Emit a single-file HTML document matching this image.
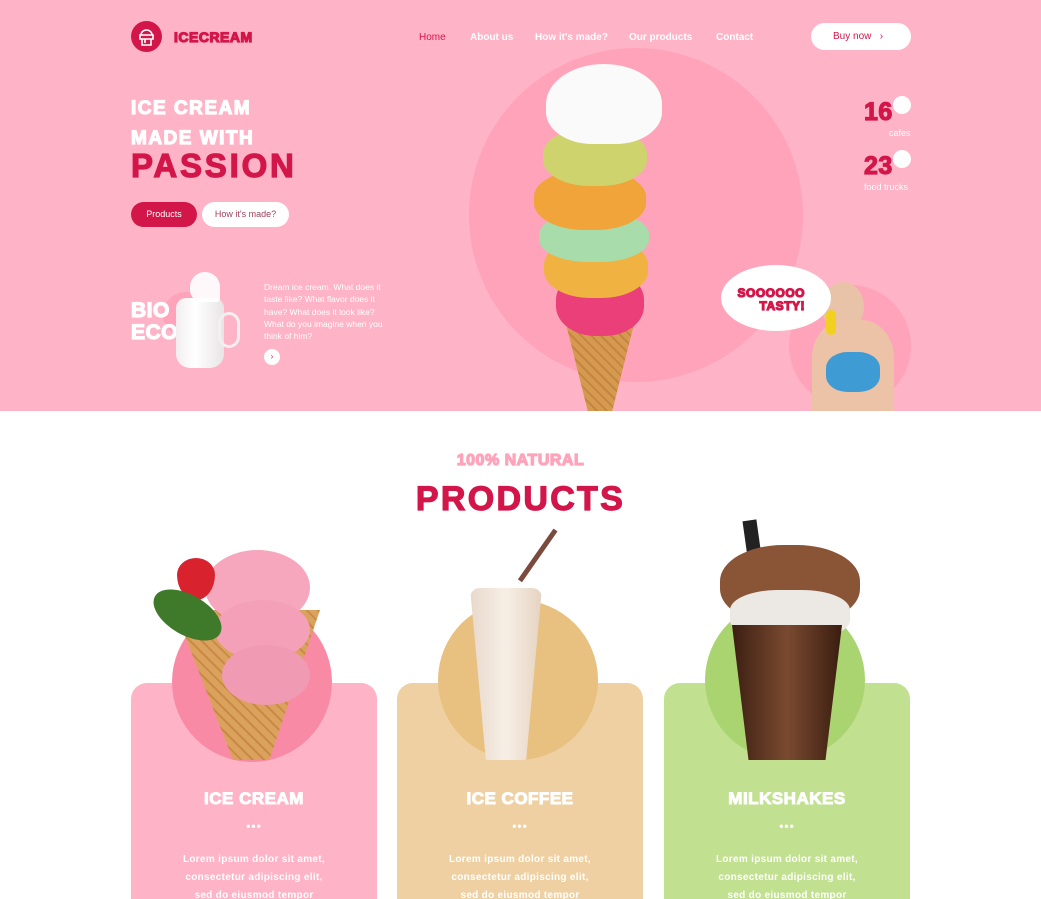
<!DOCTYPE html>
<html style="width:1041px;height:899px;overflow:hidden"><head><meta charset="utf-8"><style>
*{margin:0;padding:0;box-sizing:border-box}
body{width:1041px;height:899px;overflow:hidden;background:#fff;font-family:"Liberation Sans",sans-serif;position:relative}
.abs{position:absolute}
.hero{position:absolute;left:0;top:0;width:1041px;height:411px;background:#ffb3c6;overflow:hidden}
.heavy{font-weight:900;-webkit-text-stroke:1.2px currentColor;letter-spacing:0.5px}
.nav a{position:absolute;top:32px;font-size:10px;font-weight:bold;color:#fff;text-decoration:none}
.card{position:absolute;top:683px;width:246px;height:240px;border-radius:16px;text-align:center;color:#fff}
.card h3{position:absolute;top:106px;width:100%;font-size:17px;font-weight:900;-webkit-text-stroke:1px #fff;letter-spacing:0.5px}
.card .dots{position:absolute;top:136px;width:100%;font-size:12px;font-weight:bold;letter-spacing:1px}
.card p{position:absolute;top:168px;width:100%;font-size:10px;font-weight:bold;line-height:18px;letter-spacing:0.3px}
</style></head><body>
<div class="hero">
  <div class="abs" style="left:469px;top:48px;width:334px;height:334px;border-radius:50%;background:#ffa3ba"></div>
  <div class="abs" style="left:789px;top:285px;width:122px;height:122px;border-radius:50%;background:#ffa3ba"></div>
  <div class="abs" style="left:131px;top:21px;width:31px;height:31px;border-radius:50%;background:#d3164a"></div>
  <svg class="abs" style="left:131px;top:21px" width="31" height="31" viewBox="0 0 31 31"><path d="M10 14a5.5 5 0 0 1 11 0M9 14h13v4H9zM11 18v6h9v-6M14 18v4" fill="none" stroke="#fff" stroke-width="1.6"/></svg>
  <div class="abs heavy" style="left:174px;top:29px;font-size:14px;color:#d3164a">ICECREAM</div>
  <div class="nav">
    <a style="left:419px;color:#d3164a;font-weight:normal">Home</a>
    <a style="left:470px">About us</a>
    <a style="left:535px">How it's made?</a>
    <a style="left:629px">Our products</a>
    <a style="left:716px">Contact</a>
  </div>
  <div class="abs" style="left:811px;top:23px;width:100px;height:27px;border-radius:14px;background:#fff;color:#d3164a;font-size:10px;line-height:27px;padding-left:22px">Buy now &nbsp;&nbsp;›</div>
  <div class="abs heavy" style="left:131px;top:94px;font-size:19px;color:#fff;line-height:30px;letter-spacing:1.5px">ICE CREAM<br>MADE WITH</div>
  <div class="abs heavy" style="left:131px;top:147px;font-size:33px;color:#d3164a;letter-spacing:2.8px">PASSION</div>
  <div class="abs" style="left:131px;top:202px;width:66px;height:25px;border-radius:13px;background:#d3164a;color:#fff;font-size:9px;line-height:25px;text-align:center">Products</div>
  <div class="abs" style="left:202px;top:202px;width:87px;height:25px;border-radius:13px;background:#fff;color:#a0405a;font-size:9px;line-height:25px;text-align:center">How it's made?</div>
  <div class="abs" style="left:163px;top:292px;width:45px;height:45px;border-radius:50%;background:#ffa3ba"></div>
  <div class="abs heavy" style="left:131px;top:300px;font-size:21px;color:#fff;line-height:22px">BIO<br>ECO</div>
  <div class="abs" style="left:176px;top:298px;width:48px;height:70px;border-radius:10px 10px 14px 14px;background:linear-gradient(90deg,#f2eef0,#fff 40%,#e8e4e6)"></div>
  <div class="abs" style="left:218px;top:312px;width:22px;height:36px;border:3px solid #f3eef0;border-radius:12px"></div>
  <div class="abs" style="left:190px;top:272px;width:30px;height:30px;border-radius:50% 50% 10% 40%;background:#fff;opacity:.9"></div>
  <div class="abs" style="left:264px;top:281px;width:130px;font-size:8.5px;line-height:12.3px;color:#fff">Dream ice cream. What does it taste like? What flavor does it have? What does it look like? What do you imagine when you think of him?</div>
  <div class="abs" style="left:264px;top:349px;width:16px;height:16px;border-radius:50%;background:#fff;color:#d3164a;font-size:8px;text-align:center;line-height:16px">›</div>
  <div class="abs" style="left:560px;top:300px;width:80px;height:112px;background:repeating-linear-gradient(45deg,#d59a50 0 5px,#c58440 5px 7px);clip-path:polygon(0 0,100% 0,65% 100%,35% 100%)"></div>
  <div class="abs" style="left:556px;top:270px;width:88px;height:66px;border-radius:45%;background:#ea3f78"></div>
  <div class="abs" style="left:544px;top:238px;width:104px;height:60px;border-radius:45%;background:#f0b240"></div>
  <div class="abs" style="left:539px;top:212px;width:110px;height:50px;border-radius:45%;background:#a8dcaa"></div>
  <div class="abs" style="left:534px;top:170px;width:112px;height:60px;border-radius:45%;background:#f0a43a"></div>
  <div class="abs" style="left:543px;top:128px;width:104px;height:58px;border-radius:45%;background:#cfd36e"></div>
  <div class="abs" style="left:546px;top:64px;width:116px;height:80px;border-radius:50% 50% 40% 40%;background:#fafafa"></div>
  <div class="abs" style="left:893px;top:96px;width:18px;height:18px;border-radius:50%;background:#fff"></div>
  <div class="abs heavy" style="left:864px;top:98px;font-size:25px;color:#d3164a">16</div>
  <div class="abs" style="left:889px;top:128px;font-size:9px;color:#fff">cafes</div>
  <div class="abs" style="left:893px;top:150px;width:18px;height:18px;border-radius:50%;background:#fff"></div>
  <div class="abs heavy" style="left:864px;top:152px;font-size:25px;color:#d3164a">23</div>
  <div class="abs" style="left:864px;top:182px;font-size:9px;color:#fff">food trucks</div>
  <div class="abs" style="left:822px;top:282px;width:42px;height:50px;border-radius:50%;background:#e9c3a8"></div>
  <div class="abs" style="left:812px;top:320px;width:82px;height:95px;border-radius:40% 40% 0 0;background:#ecc3a6"></div>
  <div class="abs" style="left:826px;top:352px;width:54px;height:40px;border-radius:40%;background:#3e9bd4"></div>
  <div class="abs" style="left:826px;top:310px;width:10px;height:25px;background:#f2d020;border-radius:5px"></div>
  <div class="abs" style="left:721px;top:265px;width:110px;height:66px;border-radius:50%;background:#fff"></div>
  <div class="abs heavy" style="left:735px;top:287px;font-size:12px;color:#d3164a;line-height:13px;text-align:right;width:70px">SOOOOOO<br>TASTY!</div>
</div>
<div class="abs heavy" style="left:0;top:452px;width:1041px;text-align:center;font-size:16px;color:#ffa3ba">100% NATURAL</div>
<div class="abs heavy" style="left:0;top:480px;width:1041px;text-align:center;font-size:34px;color:#d3164a;letter-spacing:2.3px">PRODUCTS</div>

<div class="card" style="left:131px;background:#ffb3c6"><h3>ICE CREAM</h3><div class="dots">•••</div><p>Lorem ipsum dolor sit amet,<br>consectetur adipiscing elit,<br>sed do eiusmod tempor</p></div>
<div class="card" style="left:397px;background:#efd0a2"><h3>ICE COFFEE</h3><div class="dots">•••</div><p>Lorem ipsum dolor sit amet,<br>consectetur adipiscing elit,<br>sed do eiusmod tempor</p></div>
<div class="card" style="left:664px;background:#c1e090"><h3>MILKSHAKES</h3><div class="dots">•••</div><p>Lorem ipsum dolor sit amet,<br>consectetur adipiscing elit,<br>sed do eiusmod tempor</p></div>

<div class="abs" style="left:172px;top:602px;width:160px;height:160px;border-radius:50%;background:#f98aa5"></div>
<div class="abs" style="left:438px;top:600px;width:160px;height:160px;border-radius:50%;background:#e8c07f"></div>
<div class="abs" style="left:705px;top:600px;width:160px;height:160px;border-radius:50%;background:#a9d470"></div>

<div class="abs" style="left:175px;top:610px;width:145px;height:150px;background:repeating-linear-gradient(45deg,#dba25e 0 6px,#c88a44 6px 8px);clip-path:polygon(0 0,100% 0,65% 100%,40% 100%)"></div>
<div class="abs" style="left:205px;top:550px;width:105px;height:75px;border-radius:50%;background:#f6a7bd"></div>
<div class="abs" style="left:215px;top:600px;width:95px;height:60px;border-radius:50%;background:#f3a0b8"></div>
<div class="abs" style="left:222px;top:645px;width:88px;height:60px;border-radius:50%;background:#f19ab3"></div>
<div class="abs" style="left:177px;top:558px;width:38px;height:42px;border-radius:50% 50% 50% 50%/40% 40% 60% 60%;background:#d8222e"></div>
<div class="abs" style="left:150px;top:595px;width:75px;height:40px;border-radius:50%;background:#3f7a2a;transform:rotate(30deg)"></div>
<div class="abs" style="left:470px;top:588px;width:72px;height:172px;border-radius:10px 10px 20px 20px;background:linear-gradient(90deg,#e8d9cc,#f7efe6 50%,#e6d3c0);clip-path:polygon(0 0,100% 0,90% 45%,78% 100%,22% 100%,10% 45%)"></div>
<div class="abs" style="left:553px;top:530px;width:5px;height:62px;background:#7a4a3e;transform:rotate(35deg);transform-origin:top"></div>
<div class="abs" style="left:748px;top:520px;width:14px;height:80px;background:#222;transform:rotate(-8deg)"></div>
<div class="abs" style="left:720px;top:545px;width:140px;height:80px;border-radius:45%;background:#8a5536"></div>
<div class="abs" style="left:730px;top:590px;width:120px;height:50px;border-radius:40%;background:#ece8e4"></div>
<div class="abs" style="left:732px;top:625px;width:110px;height:135px;background:linear-gradient(90deg,#3c1f12,#7a4a30 50%,#3a1d10);clip-path:polygon(0 0,100% 0,85% 100%,15% 100%)"></div>
</body></html>
